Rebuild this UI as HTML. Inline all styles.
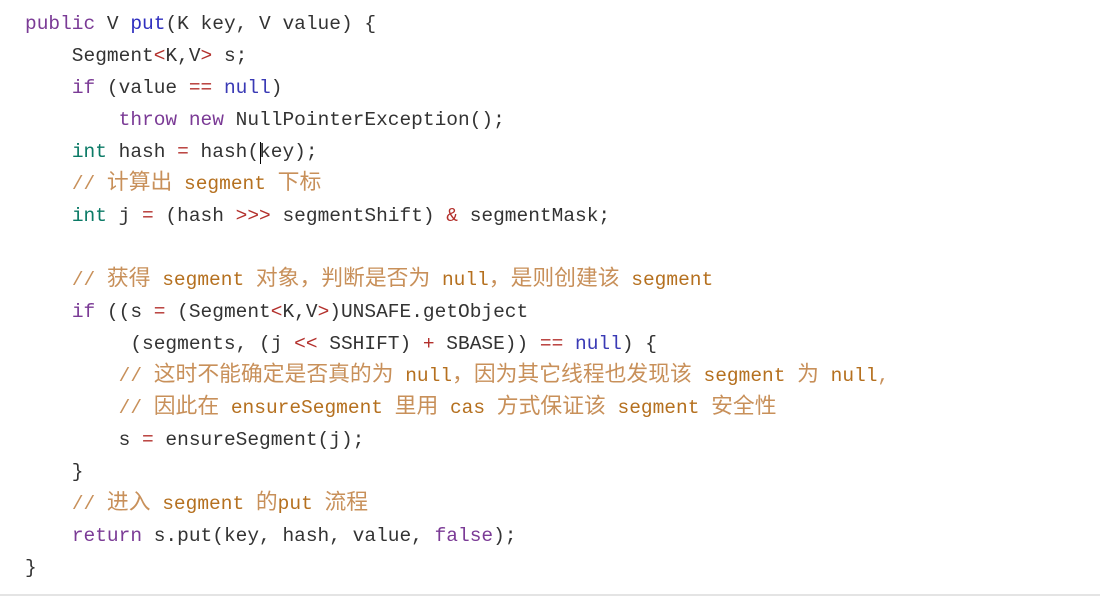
<!DOCTYPE html>
<html><head><meta charset="utf-8"><style>
body{margin:0;width:1100px;height:596px;background:#fff;overflow:hidden}
.w{position:absolute;left:25px;top:8px;font-family:"Liberation Mono","Noto Sans CJK SC",monospace;font-size:19.5px;color:#333}
.w div{height:32px;line-height:32px;overflow:visible;white-space:pre}
.k{color:#7b3b96}.b{color:#2f2fbf}.n{color:#3a3ab5}.t{color:#0b7a66}.o{color:#b3302c}
.c{color:#c8905a}.cb{color:#b5701f}
.z{font-family:"Noto Sans CJK SC",sans-serif;font-size:21.8px;line-height:0}
</style></head><body>
<div class="w">
<div><span class="k">public</span> V <span class="b">put</span>(K key, V value) {</div>
<div>    Segment<span class="o">&lt;</span>K,V<span class="o">&gt;</span> s;</div>
<div>    <span class="k">if</span> (value <span class="o">==</span> <span class="n">null</span>)</div>
<div>        <span class="k">throw</span> <span class="k">new</span> NullPointerException();</div>
<div>    <span class="t">int</span> hash <span class="o">=</span> hash(key);</div>
<div>    <span class="c">// <span class="z">计算出</span> <span class="cb">segment</span> <span class="z">下标</span></span></div>
<div>    <span class="t">int</span> j <span class="o">=</span> (hash <span class="o">&gt;&gt;&gt;</span> segmentShift) <span class="o">&amp;</span> segmentMask;</div>
<div> </div>
<div>    <span class="c">// <span class="z">获得</span> <span class="cb">segment</span> <span class="z">对象，判断是否为</span> <span class="cb">null</span><span class="z">，是则创建该</span> <span class="cb">segment</span></span></div>
<div>    <span class="k">if</span> ((s <span class="o">=</span> (Segment<span class="o">&lt;</span>K,V<span class="o">&gt;</span>)UNSAFE.getObject</div>
<div>         (segments, (j <span class="o">&lt;&lt;</span> SSHIFT) <span class="o">+</span> SBASE)) <span class="o">==</span> <span class="n">null</span>) {</div>
<div>        <span class="c">// <span class="z">这时不能确定是否真的为</span> <span class="cb">null</span><span class="z">，因为其它线程也发现该</span> <span class="cb">segment</span> <span class="z">为</span> <span class="cb">null</span>,</span></div>
<div>        <span class="c">// <span class="z">因此在</span> <span class="cb">ensureSegment</span> <span class="z">里用</span> <span class="cb">cas</span> <span class="z">方式保证该</span> <span class="cb">segment</span> <span class="z">安全性</span></span></div>
<div>        s <span class="o">=</span> ensureSegment(j);</div>
<div>    }</div>
<div>    <span class="c">// <span class="z">进入</span> <span class="cb">segment</span> <span class="z">的</span><span class="cb">put</span> <span class="z">流程</span></span></div>
<div>    <span class="k">return</span> s.put(key, hash, value, <span class="k">false</span>);</div>
<div>}</div>
</div>
<div style="position:absolute;left:260px;top:142px;width:1px;height:22px;background:#000"></div>
<div style="position:absolute;left:0;top:594px;width:1100px;height:2px;background:#e4e4e4"></div>
</body></html>
